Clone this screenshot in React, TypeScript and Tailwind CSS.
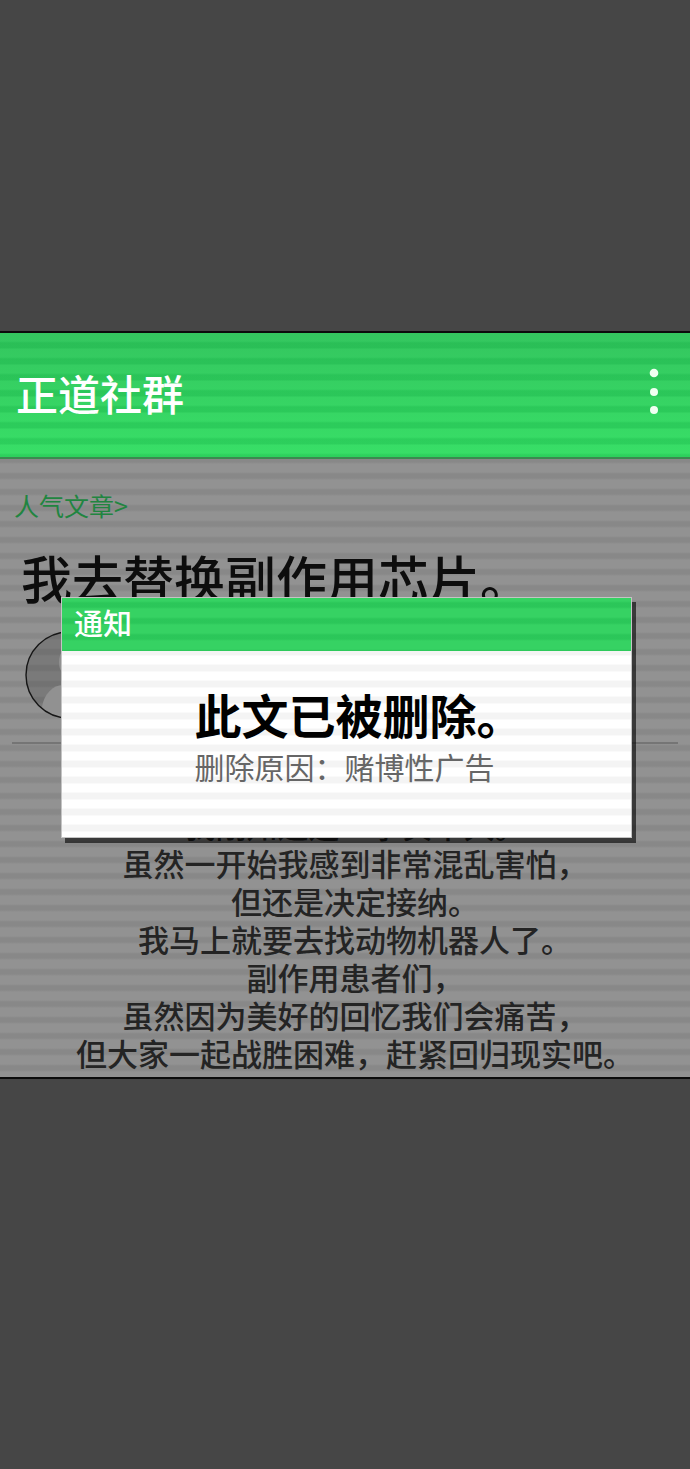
import * as React from "react";

const POST_LINES = [
  "我刚知道这一事实不久。",
  "虽然一开始我感到非常混乱害怕，",
  "但还是决定接纳。",
  "我马上就要去找动物机器人了。",
  "副作用患者们，",
  "虽然因为美好的回忆我们会痛苦，",
  "但大家一起战胜困难，赶紧回归现实吧。",
];

function AppHeader() {
  return (
    <header className="flex h-[126px] items-center justify-between border-b-2 border-[#3b8a50] bg-[repeating-linear-gradient(transparent_0_8px,#00993333_10px_15px,transparent_16px),linear-gradient(#34c65f,#38df67)] pr-6 pb-1 pl-4">
      <h1 className="text-[42px] leading-[60px] font-medium text-white">正道社群</h1>
      <button type="button" aria-label="菜单" className="flex h-16 w-6 items-center justify-center">
        <svg viewBox="0 0 24 64" className="h-16 w-6" fill="#f0fff2">
          <circle cx="12" cy="12" r="4.3" />
          <circle cx="12" cy="31" r="4" />
          <circle cx="12" cy="49" r="4" />
        </svg>
      </button>
    </header>
  );
}

function Avatar() {
  return (
    <svg viewBox="0 0 88 88" className="mt-[22px] ml-[25px] size-[88px]" aria-hidden="true">
      <defs>
        <clipPath id="avatar-clip">
          <circle cx="44" cy="44" r="43" />
        </clipPath>
      </defs>
      <circle cx="44" cy="44" r="43" fill="#000" fillOpacity="0.16" />
      <g clipPath="url(#avatar-clip)" fill="#919191">
        <ellipse cx="44" cy="31" rx="10" ry="15" />
        <path d="M17 90V76C19 63 28 54 38 54H50C60 54 69 63 71 76V90Z" />
      </g>
      <circle cx="44" cy="44" r="43" fill="none" stroke="#161616" strokeWidth="1.4" />
    </svg>
  );
}

function Post() {
  return (
    <article className="bg-[#929292] bg-[repeating-linear-gradient(#00000012_0_3px,transparent_5px_13px,#00000012_15px_16px)] pt-[30px] pb-[5px]">
      <a href="#popular" className="block w-fit pl-[14px] text-[25px] leading-8 text-[#218540]">
        人气文章&gt;
      </a>
      <h2 className="mt-6 pl-[21px] text-[51px] leading-[64px] font-medium whitespace-nowrap text-[#0d0d0d]">
        我去替换副作用芯片。
      </h2>
      <Avatar />
      <hr className="mx-3 mt-[23px] border-t-2 border-[#757575]" />
      <div className="mt-[62px] pl-5 text-center text-[31px] leading-[38px] font-medium whitespace-nowrap text-[#242424]">
        {POST_LINES.map((line) => (
          <p key={line}>{line}</p>
        ))}
      </div>
    </article>
  );
}

function NoticeDialog() {
  return (
    <section
      role="dialog"
      aria-labelledby="notice-title"
      className="absolute top-[264px] right-[58px] left-[61px] border border-[#c4c4c4] shadow-[4px_5px_0_#00000099]"
    >
      <h3
        id="notice-title"
        className="h-[53px] bg-[#36d263] bg-[repeating-linear-gradient(transparent_0_3px,#00993333_5px_9px,transparent_11px_16px)] pl-3 text-[29px] leading-[48px] font-medium text-white"
      >
        通知
      </h3>
      <div className="bg-white bg-[repeating-linear-gradient(#0000000b_0_4px,transparent_5px_13px,#0000000b_14px_16px)] pt-[30px] pb-[52px]">
        <div className="mx-auto w-[304px] whitespace-nowrap">
          <p className="text-[47px] leading-[66px] font-bold text-black">此文已被删除。</p>
          <p className="text-[30px] leading-[38px] text-[#666666]">删除原因：赌博性广告</p>
        </div>
      </div>
    </section>
  );
}

export default function App() {
  return (
    <main
      lang="zh-CN"
      className="min-h-screen bg-[#464646] pt-[331px] font-['Noto_Sans_CJK_SC',sans-serif]"
    >
      <div className="relative border-y-2 border-[#0c0c0c]">
        <AppHeader />
        <Post />
        <NoticeDialog />
      </div>
    </main>
  );
}
